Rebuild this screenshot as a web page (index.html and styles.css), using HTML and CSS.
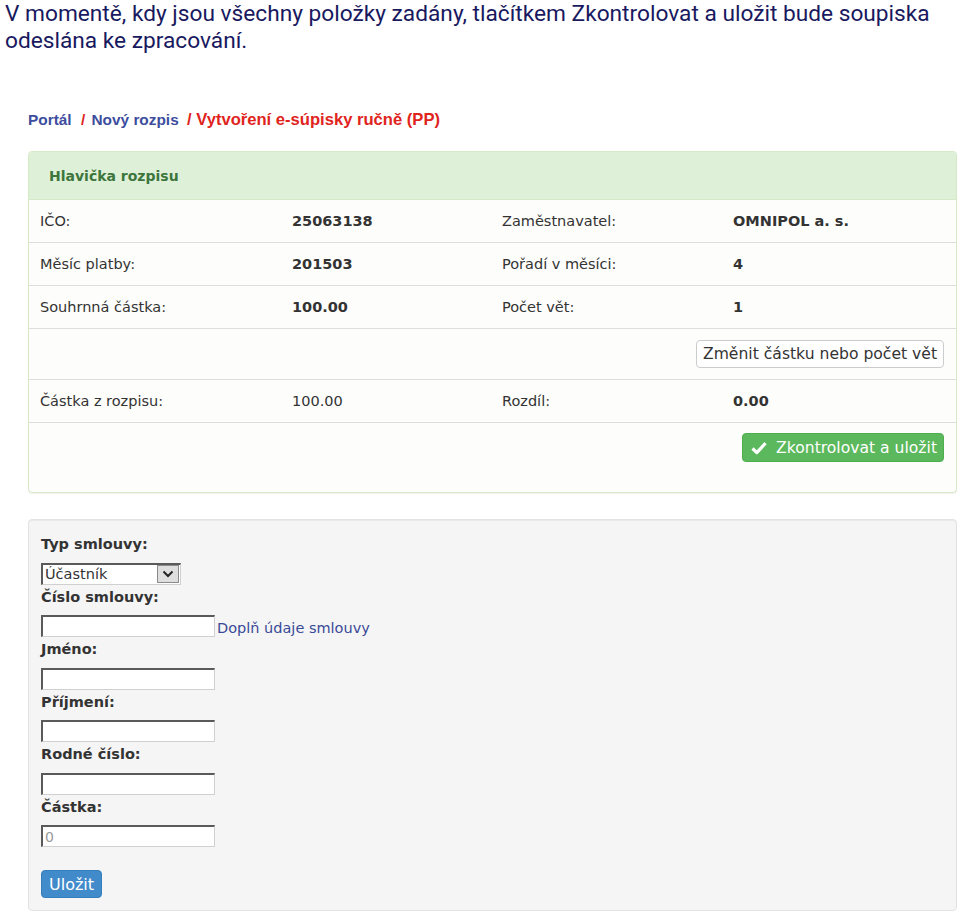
FILE: index.html
```html
<!DOCTYPE html>
<html lang="cs">
<head>
    <meta charset="UTF-8">
    <meta name="viewport" content="width=device-width, initial-scale=1.0">
    <title>Vytvoření e-súpisky ručně</title>
    <link rel="stylesheet" href="styles.css">
</head>
<body>
    <p class="intro">V momentě, kdy jsou všechny položky zadány, tlačítkem Zkontrolovat a uložit bude soupiska odeslána ke zpracování.</p>

    <main class="page">
        <nav class="crumbs">
            <a href="#">Portál</a>
            <span class="sep">/</span>
            <a href="#">Nový rozpis</a>
            <span class="current"><span class="sep">/</span> Vytvoření e-súpisky ručně (PP)</span>
        </nav>

        <!-- hlavička rozpisu -->
        <section class="panel">
            <div class="panel-heading">Hlavička rozpisu</div>
            <div class="panel-body">
                <div class="row">
                    <span class="cell">IČO:</span>
                    <strong class="cell">25063138</strong>
                    <span class="cell">Zaměstnavatel:</span>
                    <strong class="cell">OMNIPOL a. s.</strong>
                </div>
                <div class="row">
                    <span class="cell">Měsíc platby:</span>
                    <strong class="cell">201503</strong>
                    <span class="cell">Pořadí v měsíci:</span>
                    <strong class="cell">4</strong>
                </div>
                <div class="row">
                    <span class="cell">Souhrnná částka:</span>
                    <strong class="cell">100.00</strong>
                    <span class="cell">Počet vět:</span>
                    <strong class="cell">1</strong>
                </div>
                <div class="row row-action">
                    <button type="button" class="btn btn-default">Změnit částku nebo počet vět</button>
                </div>
                <div class="row">
                    <span class="cell">Částka z rozpisu:</span>
                    <span class="cell">100.00</span>
                    <span class="cell">Rozdíl:</span>
                    <strong class="cell">0.00</strong>
                </div>
                <div class="row row-action row-last">
                    <button type="button" class="btn btn-success">
                        <svg class="icon-ok" width="16" height="14" viewBox="0 0 16 14">
                            <path d="M1.5 7.5 L5.8 11.6 L14.5 2.2" fill="none" stroke="#fff" stroke-width="3.2" stroke-linejoin="round"/>
                        </svg>
                        Zkontrolovat a uložit
                    </button>
                </div>
            </div>
        </section>

        <!-- nová věta -->
        <form class="well">
            <label class="field-label" for="typ">Typ smlouvy:</label>
            <div class="select-box">
                <select id="typ">
                    <option>Účastník</option>
                    <option>Zaměstnavatel</option>
                </select>
                <span class="select-arrow">
                    <svg width="12" height="8" viewBox="0 0 12 8">
                        <path d="M1.5 1.5 L6 6 L10.5 1.5" fill="none" stroke="#222" stroke-width="2"/>
                    </svg>
                </span>
            </div>

            <label class="field-label" for="cislo">Číslo smlouvy:</label>
            <div class="field-line">
                <input id="cislo" class="text-input" type="text">
                <a href="#" class="fill-link">Doplň údaje smlouvy</a>
            </div>

            <label class="field-label" for="jmeno">Jméno:</label>
            <input id="jmeno" class="text-input" type="text">

            <label class="field-label" for="prijmeni">Příjmení:</label>
            <input id="prijmeni" class="text-input" type="text">

            <label class="field-label" for="rc">Rodné číslo:</label>
            <input id="rc" class="text-input" type="text">

            <label class="field-label" for="castka">Částka:</label>
            <input id="castka" class="text-input" type="text" placeholder="0">

            <button type="button" class="btn btn-primary">Uložit</button>
        </form>
    </main>
</body>
</html>
```

FILE: styles.css
```css
body {
    margin: 0;
    background-color: #fff;
    font-family: "DejaVu Sans", Verdana, sans-serif;
    color: #333;
}

.intro {
    margin: 0;
    padding: 0 5px;
    font-family: Roboto, "Liberation Sans", sans-serif;
    font-size: 22.7px;
    line-height: 27px;
    color: #191960;
}

.page {
    padding: 0 3px 0 28px;
}

.crumbs {
    margin: 56px 0 21px;
    font-family: "Liberation Sans", Arial, sans-serif;
    font-weight: bold;
    font-size: 15.4px;
    line-height: 20px;
}

.crumbs a {
    color: #3d4d9e;
    text-decoration: none;
}

.crumbs .sep {
    color: #e0241d;
    margin: 0 2px 0 5px;
}

.crumbs .current {
    color: #e0241d;
    font-size: 16.6px;
}

.crumbs .current .sep {
    margin: 0 0 0 4px;
}

/* panel */

.panel {
    border: 1px solid #d6e9c6;
    border-radius: 4px;
    background-color: #fdfdfb;
    box-shadow: 0 1px 1px rgba(0, 0, 0, 0.05);
}

.panel-heading {
    padding: 14px 20px 13px;
    line-height: 20px;
    font-size: 14px;
    font-weight: bold;
    color: #3c763d;
    background-color: #dff0d8;
    border-bottom: 1px solid #d6e9c6;
    border-radius: 3px 3px 0 0;
}

.row {
    display: grid;
    grid-template-columns: 252px 210px 231px 1fr;
    align-items: center;
    padding: 12px 0 11px;
    line-height: 19px;
    font-size: 14.5px;
    border-bottom: 1px solid #dddddd;
}

.cell {
    padding-left: 11px;
}

strong.cell {
    font-weight: bold;
}

.row-action {
    display: flex;
    justify-content: flex-end;
    padding: 11px 12px 11px 0;
}

.row-last {
    border-bottom: none;
    padding: 10px 12px 30px 0;
}

/* buttons */

.btn {
    display: inline-flex;
    align-items: center;
    gap: 9px;
    padding: 0 6px;
    height: 28px;
    font-family: "DejaVu Sans", Verdana, sans-serif;
    font-size: 15.6px;
    border: 1px solid transparent;
    border-radius: 4px;
    cursor: pointer;
}

.btn-default {
    color: #333;
    background-color: #fff;
    border-color: #ccc;
}

.btn-success {
    height: 29px;
    padding: 0 6px 0 8px;
    color: #fff;
    background-color: #5cb85c;
    border-color: #4cae4c;
}

.btn-primary {
    margin-top: 23px;
    height: 28px;
    padding: 0 7px;
    color: #fff;
    font-size: 16px;
    background-color: #428bca;
    border-color: #357ebd;
}

.icon-ok {
    flex-shrink: 0;
}

/* formulář */

.well {
    margin-top: 26px;
    padding: 12px;
    background-color: #f5f5f5;
    border: 1px solid #e3e3e3;
    border-radius: 4px;
    box-shadow: inset 0 1px 1px rgba(0, 0, 0, 0.05);
}

.field-label {
    display: block;
    padding-top: 2px;
    margin-bottom: 8.5px;
    line-height: 20px;
    font-size: 14.5px;
    font-weight: bold;
    color: #333;
}

.text-input {
    display: block;
    box-sizing: border-box;
    width: 174px;
    height: 22px;
    margin: 0;
    padding: 1px 2px;
    font-family: "DejaVu Sans", Verdana, sans-serif;
    font-size: 14px;
    background-color: #fff;
    border-style: solid;
    border-width: 2px 1px 1px 2px;
    border-color: #5a5a5a #d0d0d0 #d0d0d0 #5a5a5a;
    outline: none;
}

.text-input::placeholder {
    color: #999;
}

.field-line {
    display: flex;
    align-items: flex-end;
    gap: 2px;
}

.fill-link {
    font-size: 14.5px;
    line-height: 18px;
    color: #3a4a98;
    text-decoration: none;
}

.select-box {
    display: flex;
    box-sizing: border-box;
    width: 140px;
    height: 22px;
    background-color: #fff;
    border-style: solid;
    border-width: 2px 1px 1px 2px;
    border-color: #5a5a5a #d0d0d0 #d0d0d0 #5a5a5a;
}

.select-box select {
    flex: 1;
    min-width: 0;
    margin: 0;
    padding: 0 2px;
    font-family: "DejaVu Sans", Verdana, sans-serif;
    font-size: 14.5px;
    color: #333;
    background: transparent;
    border: none;
    outline: none;
    appearance: none;
    -webkit-appearance: none;
}

.select-arrow {
    display: flex;
    align-items: center;
    justify-content: center;
    width: 20px;
    margin: 0 1px 1px 0;
    background-color: #dedede;
    border: 1px solid #8a8a8a;
}
```
